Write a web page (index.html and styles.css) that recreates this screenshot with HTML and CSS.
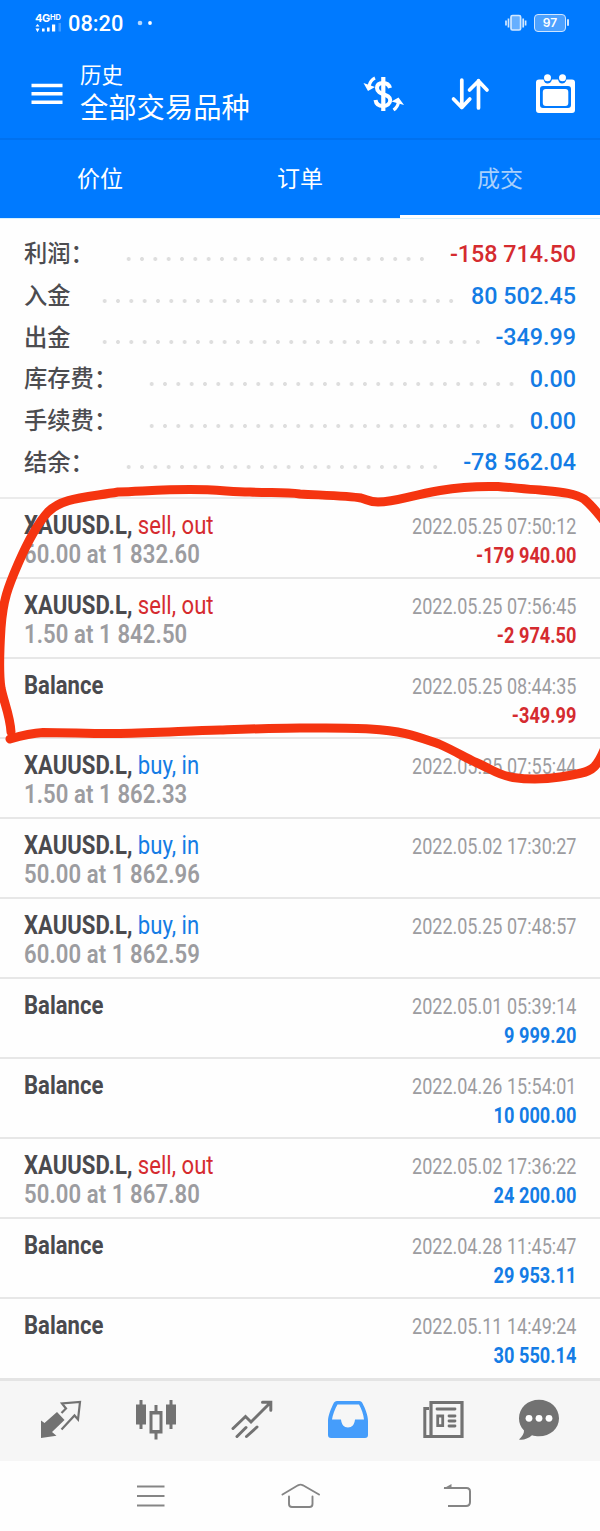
FILE: index.html
```html
<!DOCTYPE html>
<html lang="zh-CN">
<head>
<meta charset="utf-8">
<title>历史</title>
<link rel="stylesheet" href="styles.css">
</head>
<body>
<div class="screen">
  <header class="header">
    <div class="status">
      <div class="signal">
        <div class="net">4G<span class="hd">HD</span></div>
        <svg class="bars" width="27" height="10" viewBox="0 0 27 10"><path d="M0.5 3.6 L2.5 1 L4.5 3.6Z M0.5 5.6 L2.5 9.2 L4.5 5.6Z M7 5.5h2.600v3H7z M12 4.500h2.600v4H12z M17 1.500h3.200v7H17z" fill="#fff"/><path d="M23.500 0h2.500v8.500h-2.500z" fill="#fff" opacity=".25"/></svg>
      </div>
      <span class="clock">08:20</span>
      <svg class="dots" width="16" height="6" viewBox="0 0 16 6"><circle cx="3" cy="3" r="2.300" fill="#fff" opacity=".7"/><circle cx="13" cy="3" r="1.900" fill="#fff"/></svg>
      <svg class="vibrate" width="22" height="18" viewBox="0 0 22 18" fill="none" stroke="#d3e8ff" stroke-width="1.700"><rect x="6" y="1.500" width="9.600" height="14.500" rx="1.500" fill="#66afff"/><path d="M3.500 4.500v9M1 6.500v5M18.200 4.500v9M20.600 6.500v5"/></svg>
      <div class="battery"><span class="charge">97</span></div>
    </div>
    <div class="toolbar">
      <svg class="burger" width="32" height="22" viewBox="0 0 32 22"><path d="M.5 2.500h31M.5 10.700h31M.5 19.200h31" stroke="#fff" stroke-width="3.600"/></svg>
      <div class="titles">
        <div class="title-small">历史</div>
        <div class="title-main">全部交易品种</div>
      </div>
      <svg class="tool" width="42" height="40" viewBox="0 0 42 40" fill="none" stroke="#fff"><path d="M21.300 3v34" stroke-width="4.200"/><path d="M28 14C27 10.500 24.500 9 21 9c-4 0-6 2-6 5 0 7.800 13.200 5 13.200 12 0 4-3.200 6-7.200 6-4.500 0-7-2.500-7.500-6" stroke-width="4"/><path d="M13 4C9.500 5.500 8 8 7 12M31.500 36c3-2 4.500-4.500 5-8" stroke-width="3.200"/><path d="M1.500 9l4.500 8 7-4zM29.500 27.500l7-4 5.500 7.500z" fill="#fff" stroke="none"/></svg>
      <svg class="tool" width="42" height="40" viewBox="0 0 42 40" fill="none" stroke="#fff" stroke-width="3.700" stroke-linecap="round" stroke-linejoin="round"><path d="M12.800 6v27.500M4.500 25l8.300 8.500 8-8.500M29.500 34V6.500M20.500 16l9-9 8.500 9"/></svg>
      <svg class="tool" width="42" height="42" viewBox="0 0 42 42"><path fill="#fff" fill-rule="evenodd" d="M4 6.500h4.500c1 3 2 4 4 4s3.500-1 4.500-4h6c1 3 2 4 4 4s3.500-1 4.500-4H37a3 3 0 0 1 3 3V37a3 3 0 0 1-3 3H4a3 3 0 0 1-3-3V9.500a3 3 0 0 1 3-3zM8 13a3 3 0 0 0-3 3v16a3 3 0 0 0 3 3h25a3 3 0 0 0 3-3V16a3 3 0 0 0-3-3z"/><rect x="7.800" y="16" width="25.500" height="17" rx="3" fill="#fff"/><circle cx="12.500" cy="4.700" r="3.500" fill="#fff"/><circle cx="27.500" cy="4.700" r="3.500" fill="#fff"/></svg>
    </div>
    <nav class="tabs"><span class="tab">价位</span><span class="tab">订单</span><span class="tab active">成交</span></nav>
  </header>

  <section class="summary">
    <div class="sum-row"><span class="label">利润：</span><span class="track"><i class="leader"></i></span><span class="amount red">-158 714.50</span></div>
    <div class="sum-row"><span class="label">入金</span><span class="track"><i class="leader"></i></span><span class="amount">80 502.45</span></div>
    <div class="sum-row"><span class="label">出金</span><span class="track"><i class="leader"></i></span><span class="amount">-349.99</span></div>
    <div class="sum-row"><span class="label">库存费：</span><span class="track"><i class="leader"></i></span><span class="amount">0.00</span></div>
    <div class="sum-row"><span class="label">手续费：</span><span class="track"><i class="leader"></i></span><span class="amount">0.00</span></div>
    <div class="sum-row"><span class="label">结余：</span><span class="track"><i class="leader"></i></span><span class="amount">-78 562.04</span></div>
  </section>

  <main class="deals">
    <article class="deal"><div class="left"><div class="name">XAUUSD.L, <span class="side red">sell, out</span></div><div class="volume">60.00 at 1 832.60</div></div><div class="right"><div class="time">2022.05.25 07:50:12</div><div class="profit red">-179 940.00</div></div></article>
    <article class="deal"><div class="left"><div class="name">XAUUSD.L, <span class="side red">sell, out</span></div><div class="volume">1.50 at 1 842.50</div></div><div class="right"><div class="time">2022.05.25 07:56:45</div><div class="profit red">-2 974.50</div></div></article>
    <article class="deal"><div class="left"><div class="name">Balance</div></div><div class="right"><div class="time">2022.05.25 08:44:35</div><div class="profit red">-349.99</div></div></article>
    <article class="deal"><div class="left"><div class="name">XAUUSD.L, <span class="side">buy, in</span></div><div class="volume">1.50 at 1 862.33</div></div><div class="right"><div class="time">2022.05.25 07:55:44</div></div></article>
    <article class="deal"><div class="left"><div class="name">XAUUSD.L, <span class="side">buy, in</span></div><div class="volume">50.00 at 1 862.96</div></div><div class="right"><div class="time">2022.05.02 17:30:27</div></div></article>
    <article class="deal"><div class="left"><div class="name">XAUUSD.L, <span class="side">buy, in</span></div><div class="volume">60.00 at 1 862.59</div></div><div class="right"><div class="time">2022.05.25 07:48:57</div></div></article>
    <article class="deal"><div class="left"><div class="name">Balance</div></div><div class="right"><div class="time">2022.05.01 05:39:14</div><div class="profit">9 999.20</div></div></article>
    <article class="deal"><div class="left"><div class="name">Balance</div></div><div class="right"><div class="time">2022.04.26 15:54:01</div><div class="profit">10 000.00</div></div></article>
    <article class="deal"><div class="left"><div class="name">XAUUSD.L, <span class="side red">sell, out</span></div><div class="volume">50.00 at 1 867.80</div></div><div class="right"><div class="time">2022.05.02 17:36:22</div><div class="profit">24 200.00</div></div></article>
    <article class="deal"><div class="left"><div class="name">Balance</div></div><div class="right"><div class="time">2022.04.28 11:45:47</div><div class="profit">29 953.11</div></div></article>
    <article class="deal"><div class="left"><div class="name">Balance</div></div><div class="right"><div class="time">2022.05.11 14:49:24</div><div class="profit">30 550.14</div></div></article>
  </main>

  <nav class="bottom">
    <svg width="42" height="42" viewBox="0 0 42 42"><path d="M1 21.500l3.500 2.500L17 13l7.500 8-12.500 12 4.500 3.800L1 39z" fill="#727272"/><path d="M21.500 14l4.500-4.500-4-5L40 3l-2 17.500-3.500-4L21.500 30.500" fill="none" stroke="#727272" stroke-width="2.200"/></svg>
    <svg width="42" height="42" viewBox="0 0 42 42" fill="#727272"><path d="M4.500 1h3v4.500H11v20H7.500V30h-3v-4.500H1v-20h3.500zM34.500 1h3v4.500H41v20h-3.500V30h-3v-4.500H31v-20h3.500z"/><path fill-rule="evenodd" d="M19.500 6h3v6h5v22.500h-5v6h-3v-6h-5V12h5zM17.500 15.500V31h7V15.500z"/></svg>
    <svg width="42" height="42" viewBox="0 0 42 42" fill="none" stroke="#727272" stroke-width="3" stroke-linecap="round"><path d="M2 29.500L14.500 17.500 20 23 39 4M31.500 3.200h8.300v8M6 37.500l9-9M15.500 37.500l10.500-9.500"/></svg>
    <svg width="42" height="42" viewBox="0 0 42 42"><path fill="#459dfb" fill-rule="evenodd" d="M10 2h22.500a3 3 0 0 1 2.600 1.600C38.500 10 41 17 41 22v14a3 3 0 0 1-3 3H4a3 3 0 0 1-3-3V22C1 17 4 9.500 7 3.600A3.500 3.500 0 0 1 10 2zM10.500 5.500C8 10 5.500 16 5 20.500h9c.5 5 3 8 7 8s6.500-3 7-8h9C36.500 15.500 34.500 10 32 5.500z"/></svg>
    <svg width="42" height="42" viewBox="0 0 42 42" fill="none" stroke="#727272"><path stroke-width="3.200" d="M9 3.500h31v34H9z"/><path stroke-width="3" d="M7 9.500H2.800v28H9"/><path stroke-width="2.800" stroke-linecap="round" d="M15 10h18M27 17h6M27 22h6M27 27h6"/><path stroke-width="2.800" d="M15.700 17h5v9.700h-5z"/></svg>
    <svg width="42" height="42" viewBox="0 0 42 42"><path d="M21 .8c11.200 0 20 8 20 18.500s-8.800 18-20 18c-2.500 0-5-.3-7-1C10 40 5 41.200 1 40.500c3.200-3 5.200-6 5-9C2.500 28 1 24 1 19.300 1 8.800 9.800.8 21 .8z" fill="#727272"/><g fill="#fff"><circle cx="11" cy="19.300" r="3.400"/><circle cx="21" cy="19.300" r="3.400"/><circle cx="31" cy="19.300" r="3.400"/></g></svg>
  </nav>
  <footer class="system">
    <svg width="40" height="30" viewBox="-1.500 0 40 30" fill="none" stroke="#858585" stroke-width="2"><path d="M6.500 5.500H34M6.500 15H34M6.500 24.500H34"/></svg>
    <svg width="40" height="30" viewBox="0 0 40 30" fill="none" stroke="#858585" stroke-width="1.900" stroke-linecap="round"><path d="M2.500 13.500L18 4.300q2.500-1.300 5 0L39 13.500M9 15.500v7.500q0 3 3 3h17.500q3 0 3-3v-7.500"/></svg>
    <svg width="42" height="30" viewBox="-8 0 42 30" fill="none" stroke="#858585" stroke-width="2"><path d="M5 7h22.500q3.500 0 3.500 3.500v10.500q0 4-4 4H9"/><path d="M4.500 7.500l8-4.500v4.500z" fill="#858585" stroke="none"/></svg>
  </footer>

  <svg class="marker" width="600" height="320" viewBox="0 480 600 320" fill="none" stroke="#f53410" stroke-width="9" stroke-linecap="round" stroke-linejoin="round"><path d="M11 732C10 715 4 703 1 688C-1.500 672-.5 652 1 628C3 600 8 587 18 564C28 541 37 524 48 512C62 498 82 498 118 492C145 491 165 489.500 190 489.500C220 489.500 230 492 250 492C270 493 285 492 300 494C330 495.500 350 496 361 498C368 500 370 502 378 502C396 502 408 496 440 490.500C460 487 480 486 498 486.500C512 487.500 525 489 540 490C560 492 575 493 584 499C590 504 597 512 604 521L620 545"/><path d="M10 739C20 736 33 733 43 732.500C70 732.500 92 734 120 733.500C155 733 185 731 220 730C250 729 278 728 300 728C330 728 350 727.500 370 729C405 731 418 737 439 744C455 751 464 757 475 762C490 768 497 775 513 777.500C530 780 548 779 560 777C575 775 588 773 594 767C599 762 602 756 606 745"/></svg>
</div>
</body>
</html>
```
FILE: styles.css
```css
* { box-sizing: border-box; }
body { margin: 0; background: #fff; font-family: Roboto, "Noto Sans CJK SC", sans-serif; }
svg { display: block; flex: none; }
.screen { position: relative; width: 600px; height: 1531px; overflow: hidden; background: #fefefe; }

.header { height: 219px; background: #007aff; color: #fff; border-bottom: 1px solid #d5f1ff; }
.status { height: 46px; display: flex; align-items: center; padding: 0 34px 0 35px; }
.signal { width: 27px; height: 20px; }
.net { height: 10px; font: 700 11px/10px Inter, sans-serif; letter-spacing: -.4px; white-space: nowrap; }
.hd { font-size: 7.500px; vertical-align: 2px; letter-spacing: 0; }
.clock { margin-left: 6px; width: 57.500px; padding-top: 1px; font: 500 21.800px/24px Roboto, sans-serif; }
.dots { margin-left: 11px; }
.vibrate { margin-left: auto; margin-right: 7px; }
.battery { position: relative; width: 32px; height: 18px; border: 1.500px solid #cfe5ff; border-radius: 4px; background: #4ca1ff; text-align: center; font: 600 12px/15px Inter, sans-serif; }
.battery::after { content: ""; position: absolute; right: -4px; top: 4px; width: 2px; height: 7px; background: #cfe5ff; border-radius: 1px; }

.toolbar { height: 94px; display: flex; align-items: center; padding: 4px 23px 0 31px; border-bottom: 2px solid #0071ef; }
.titles { margin-left: 17px; margin-right: auto; padding-top: 1px; }
.title-small { font-size: 21.500px; line-height: 29px; }
.title-main { font-size: 28.300px; line-height: 38px; }
.tool { margin-left: 44.500px; }

.tabs { height: 78px; display: grid; grid-template-columns: repeat(3, 1fr); }
.tab { height: 78px; padding-top: 3px; font-size: 23px; line-height: 74px; text-align: center; }
.active { color: #a9d0fb; border-bottom: 3px solid #fff; }

.summary { height: 280px; padding: 13.500px 24px 0; border-bottom: 2px solid #ebebeb; }
.sum-row { height: 41.700px; display: flex; align-items: center; }
.label { padding-bottom: 2px; font-size: 23.300px; font-weight: 500; color: #4c4c50; }
.track { flex: 1; margin: 11px 9px 0 27.800px; }
.leader { display: block; width: round(down, 100%, 13.333px); height: 6px; background: radial-gradient(circle, #dedede 1.600px, transparent 2.300px) 0 0 / 13.333px 6px; }
.amount { padding-top: 1px; font-size: 23.300px; font-weight: 500; color: #147ce5; }

.deal { height: 80.050px; display: flex; justify-content: space-between; padding: 12px 24px 0; border-bottom: 2px solid #e7e7e7; white-space: nowrap; }
.left { transform: scaleX(.85); transform-origin: left top; }
.name { font-size: 26px; line-height: 29px; font-weight: 700; color: #4a4a4e; }
.side { font-weight: 400; color: #147ce5; }
.volume { font-size: 26px; line-height: 28px; font-weight: 600; color: #9c9ca0; letter-spacing: .1px; }
.right { text-align: right; transform: scaleX(.85); transform-origin: right top; padding-top: 1px; }
.time { font-size: 21.200px; line-height: 29px; color: #9c9ca0; }
.profit { font-size: 21.400px; line-height: 29px; font-weight: 700; color: #147ce5; }
.red { color: #d52b2f; }

.bottom { position: relative; height: 83px; margin-top: -2px; display: flex; justify-content: space-around; padding: 18px 13px 0; background: #f6f6f6; border-top: 3px solid #e4e4e4; }
.system { height: 70px; display: flex; justify-content: space-between; align-items: center; padding: 0 127px 0 129px; }
.marker { position: absolute; left: 0; top: 480px; }
```
